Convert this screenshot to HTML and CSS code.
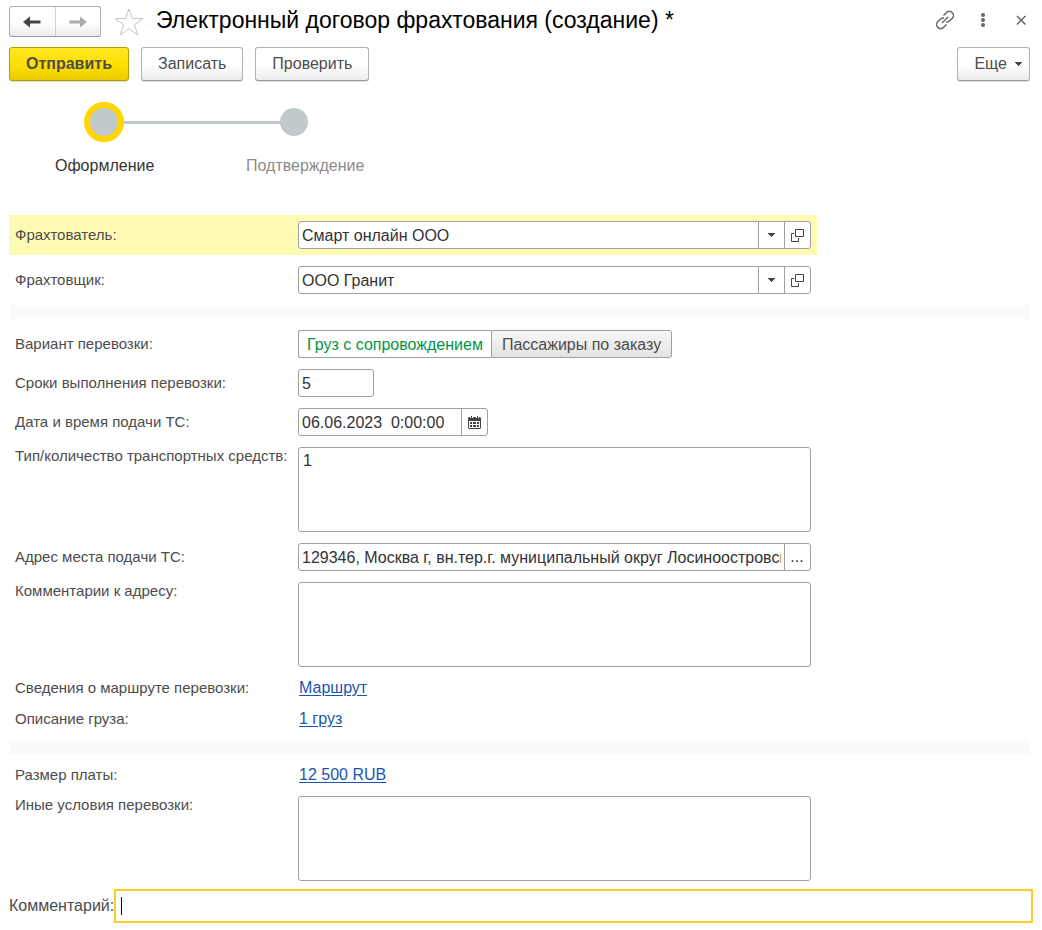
FILE: index.html
```html
<!DOCTYPE html>
<html lang="ru">
<head>
    <meta charset="UTF-8">
    <meta name="viewport" content="width=device-width, initial-scale=1.0">
    <title>Электронный договор фрахтования</title>
    <link rel="stylesheet" href="styles.css">
</head>
<body>
    <!-- Shared icons -->
    <svg class="sprite" aria-hidden="true">
        <symbol id="icon-down" viewBox="0 0 7 4">
            <path d="M0 0h7v1H6v1H5v1H4v1H3V3H2V2H1V1H0z" fill="#444"/>
        </symbol>
        <symbol id="icon-open" viewBox="0 0 13 13">
            <path d="M4.500.5h8v7h-8zM3 4.500H.5v8h7V9" fill="none" stroke="#444"/>
        </symbol>
    </svg>

    <!-- Window header -->
    <header class="header">
        <div class="nav-buttons">
            <button type="button" aria-label="Назад">
                <svg width="18" height="12" viewBox="0 0 18 12"><path d="M0 6l7-5.500v4h10.500v3H7v4z" fill="#444"/></svg>
            </button>
            <button type="button" aria-label="Вперед">
                <svg width="18" height="12" viewBox="0 0 18 12"><path d="M18 6l-7-5.500v4H.5v3H11v4z" fill="#aaa"/></svg>
            </button>
        </div>
        <button type="button" class="icon-button star" aria-label="Избранное">
            <svg width="30" height="28" viewBox="0 0 30 28"><path d="M15 1l3.500 9.600H29l-8.600 6.200 3.400 10.200-8.800-6.400L6.200 27l3.400-10.200L1 10.600h10.500z" fill="none" stroke="#bcc5ca"/></svg>
        </button>
        <h1 class="title">Электронный договор фрахтования (создание) *</h1>
        <div class="window-tools">
            <button type="button" class="icon-button" aria-label="Ссылка">
                <svg width="20" height="20" viewBox="0 0 20 20">
                    <g fill="none" stroke="#666" stroke-width="1.500">
                        <path d="M8.500 5.500l2.800-2.800a3.900 3.900 0 0 1 6 0a3.900 3.900 0 0 1 0 5.500l-3 2.800a3.900 3.900 0 0 1-3.300 1"/>
                        <path d="M11.500 14.500l-2.800 2.800a3.900 3.900 0 0 1-6 0a3.900 3.900 0 0 1 0-5.500l3-2.800a3.900 3.900 0 0 1 3.300-1"/>
                        <path d="M7 13l6-6"/>
                    </g>
                </svg>
            </button>
            <button type="button" class="icon-button" aria-label="Меню">
                <svg width="20" height="20" viewBox="0 0 20 20"><g fill="#666"><circle cx="10" cy="5" r="2"/><circle cx="10" cy="10" r="2"/><circle cx="10" cy="15" r="2"/></g></svg>
            </button>
            <button type="button" class="icon-button" aria-label="Закрыть">
                <svg width="20" height="20" viewBox="0 0 20 20"><path d="M6 6l8.500 8.500M14.500 6L6 14.500" stroke="#666" stroke-width="1.500"/></svg>
            </button>
        </div>
    </header>

    <!-- Command bar -->
    <div class="commands">
        <button type="button" class="button primary">Отправить</button>
        <button type="button" class="button">Записать</button>
        <button type="button" class="button">Проверить</button>
        <button type="button" class="button more">Еще <svg width="7" height="4"><use href="#icon-down"/></svg></button>
    </div>

    <!-- Stages -->
    <ol class="steps">
        <li class="step current"><div class="track"><span class="dot"></span></div>Оформление</li>
        <li class="step"><div class="track"><span class="dot"></span></div>Подтверждение</li>
    </ol>

    <form class="form">
        <div class="row highlight">
            <label for="charterer">Фрахтователь:</label>
            <div class="field">
                <input type="text" id="charterer" value="Смарт онлайн ООО">
                <button type="button" aria-label="Выбрать"><svg width="7" height="4"><use href="#icon-down"/></svg></button>
                <button type="button" aria-label="Открыть"><svg width="13" height="13"><use href="#icon-open"/></svg></button>
            </div>
        </div>
        <div class="row">
            <label for="carrier">Фрахтовщик:</label>
            <div class="field">
                <input type="text" id="carrier" value="ООО Гранит">
                <button type="button" aria-label="Выбрать"><svg width="7" height="4"><use href="#icon-down"/></svg></button>
                <button type="button" aria-label="Открыть"><svg width="13" height="13"><use href="#icon-open"/></svg></button>
            </div>
        </div>

        <hr class="separator">

        <div class="row" role="radiogroup" aria-labelledby="variant">
            <span class="label" id="variant">Вариант перевозки:</span>
            <div class="switch">
                <input type="radio" name="variant" id="cargo" checked>
                <label for="cargo">Груз с сопровождением</label>
                <input type="radio" name="variant" id="passengers">
                <label for="passengers">Пассажиры по заказу</label>
            </div>
        </div>
        <div class="row">
            <label for="term">Сроки выполнения перевозки:</label>
            <div class="field short"><input type="text" id="term" value="5"></div>
        </div>
        <div class="row">
            <label for="date">Дата и время подачи ТС:</label>
            <div class="field date">
                <input type="text" id="date" value="06.06.2023  0:00:00">
                <button type="button" aria-label="Календарь">
                    <svg width="13" height="13" viewBox="0 0 13 13">
                        <path d="M1 1h11l1 1v10l-1 1H1l-1-1V2z" fill="#444"/>
                        <path d="M1 5h11v7H1zM2 0h1v2H2zM5 0h1v1H5zM4 0h1v2H4zM8 0h1v2H8zM10 0h1v2h-1z" fill="#fff"/>
                        <path d="M3 0h1v3H3zM9 0h1v3H9zM2 6h2v2H2zM5 6h3v2H5zM9 6h2v2H9zM2 9h2v2H2zM5 9h3v2H5zM9 9h2v2H9z" fill="#444"/>
                    </svg>
                </button>
            </div>
        </div>
        <div class="row top">
            <label for="vehicles">Тип/количество транспортных средств:</label>
            <textarea id="vehicles">1</textarea>
        </div>
        <div class="row">
            <label for="address">Адрес места подачи ТС:</label>
            <div class="field">
                <input type="text" id="address" value="129346, Москва г, вн.тер.г. муниципальный округ Лосиноостровский">
                <button type="button" aria-label="Выбрать адрес">...</button>
            </div>
        </div>
        <div class="row top">
            <label for="address-note">Комментарии к адресу:</label>
            <textarea id="address-note"></textarea>
        </div>
        <div class="row">
            <span class="label">Сведения о маршруте перевозки:</span>
            <a href="#">Маршрут</a>
        </div>
        <div class="row">
            <span class="label">Описание груза:</span>
            <a href="#">1 груз</a>
        </div>

        <hr class="separator">

        <div class="row">
            <span class="label">Размер платы:</span>
            <a href="#">12 500 RUB</a>
        </div>
        <div class="row top">
            <label for="terms">Иные условия перевозки:</label>
            <textarea id="terms"></textarea>
        </div>
    </form>

    <div class="comment">
        <label for="comment">Комментарий:</label>
        <input type="text" id="comment">
    </div>
</body>
</html>
```
FILE: styles.css
```css
* {
    box-sizing: border-box;
}

body {
    margin: 0;
    padding: 6px 9px;
    font-family: "Liberation Sans", Arial, sans-serif;
    font-size: 16px;
    color: #4d4d4d;
    background-color: #fff;
}

button,
input,
textarea {
    font: inherit;
    color: inherit;
}

svg {
    display: block;
}

.sprite {
    position: absolute;
    width: 0;
    height: 0;
}

/* Header */
.header {
    display: flex;
    align-items: center;
    padding-right: 2px;
}

.nav-buttons {
    display: flex;
    width: 92px;
    height: 31px;
    border: 1px solid #b0b0b0;
    border-bottom-color: #999;
    border-radius: 3px;
    background: linear-gradient(#fff 50%, #ececec);
}

.nav-buttons button {
    display: flex;
    flex: 1;
    align-items: center;
    justify-content: center;
    padding: 0;
    border: none;
    background: none;
}

.nav-buttons button + button {
    border-left: 1px solid #d0d0d0;
}

.icon-button {
    padding: 0;
    border: none;
    background: none;
}

.star {
    margin: 0 12px 0 13px;
}

.title {
    flex: 1;
    margin: 0;
    padding-bottom: 2px;
    font-size: 23px;
    font-weight: normal;
    line-height: 29px;
    color: #000;
}

.window-tools {
    display: flex;
    gap: 18px;
    margin-bottom: 3px;
}

/* Command bar */
.commands {
    display: flex;
    gap: 12px;
    margin-top: 10px;
    padding-right: 3px;
}

.button {
    height: 34px;
    padding: 0 16px;
    border: 1px solid #b0b0b0;
    border-bottom-color: #999;
    border-radius: 3px;
    background: linear-gradient(#fff 50%, #ececec);
    box-shadow: 0 1px 0 #e0e0e0;
}

.primary {
    border-color: #b39b00;
    background: linear-gradient(#ffe826, #ffe000 50%, #ebcd00);
    font-weight: bold;
}

.more {
    display: flex;
    align-items: center;
    gap: 8px;
    margin-left: auto;
    padding-right: 7px;
}

/* Stages */
.steps {
    display: flex;
    margin: 21px 0 0 46px;
    padding: 0;
    list-style: none;
}

.step {
    width: 191px;
    line-height: 18px;
    color: #8c8c8c;
}

.current {
    color: #333;
}

.track {
    display: flex;
    align-items: center;
    height: 40px;
    margin-bottom: 15px;
}

.track::before {
    content: "";
    width: 34px;
    height: 3px;
    background-color: #c2c9cb;
}

.dot {
    width: 28px;
    height: 28px;
    border-radius: 50%;
    background-color: #c2c9cb;
}

.current .track::before {
    width: 29px;
    background: none;
}

.current .track::after {
    content: "";
    flex: 1;
    height: 3px;
    background-color: #c2c9cb;
}

.current .dot {
    width: 40px;
    height: 40px;
    border: 6px solid #ffd600;
}

/* Form */
.form {
    display: flex;
    flex-direction: column;
    gap: 11px;
    margin-top: 40px;
}

.row {
    display: grid;
    grid-template-columns: 283px minmax(0, 513px);
    align-items: center;
    padding: 0 6px;
    line-height: 20px;
}

.row > label,
.label {
    font-size: 15px;
}

.top {
    align-items: start;
}

.top > label {
    line-height: 18px;
}

.highlight {
    width: 808px;
    max-width: 100%;
    padding: 6px;
    background-color: #fffab3;
}

.field,
textarea {
    width: 100%;
    border: 1px solid #a0a0a0;
    border-radius: 3px;
    background-color: #fff;
    color: #333;
}

.field {
    display: flex;
    height: 28px;
    overflow: hidden;
}

.field input {
    flex: 1;
    min-width: 0;
    padding: 1px 3px 0;
    border: none;
    outline: none;
    background: none;
}

.field button {
    display: flex;
    align-items: center;
    justify-content: center;
    width: 26px;
    padding: 0 1px 0 0;
    border: none;
    border-left: 1px solid #a0a0a0;
    background: none;
}

.short {
    width: 76px;
}

.date {
    width: 190px;
}

textarea {
    display: block;
    height: 85px;
    padding: 4px;
    line-height: 18px;
    resize: none;
}

.separator {
    width: calc(100% - 3px);
    height: 14px;
    margin: 0;
    border: none;
    background-color: #fafafa;
}

.switch {
    display: flex;
}

.switch input {
    position: absolute;
    opacity: 0;
}

.switch label {
    height: 28px;
    padding: 0 10px;
    border: 1px solid #a0a0a0;
    border-radius: 0 3px 3px 0;
    background: linear-gradient(#f7f7f7, #e3e3e3);
    line-height: 27px;
}

.switch input:checked + label {
    padding: 0 8px;
    border-right: none;
    border-radius: 3px 0 0 3px;
    background: #fff;
    color: #009646;
}

.row a {
    justify-self: start;
    margin-left: 1px;
    color: #1a55b0;
    text-underline-offset: 2px;
}

/* Comment line */
.comment {
    display: flex;
    align-items: center;
    margin-top: 8px;
}

/* The focused field carries its text cursor as a background stripe */
.comment input {
    flex: 1;
    min-width: 0;
    height: 34px;
    padding: 0 5px;
    border: 2px solid #fbce20;
    outline: none;
    background: linear-gradient(#000, #000) 5px 6px / 1px 18px no-repeat #fff;
}
```
